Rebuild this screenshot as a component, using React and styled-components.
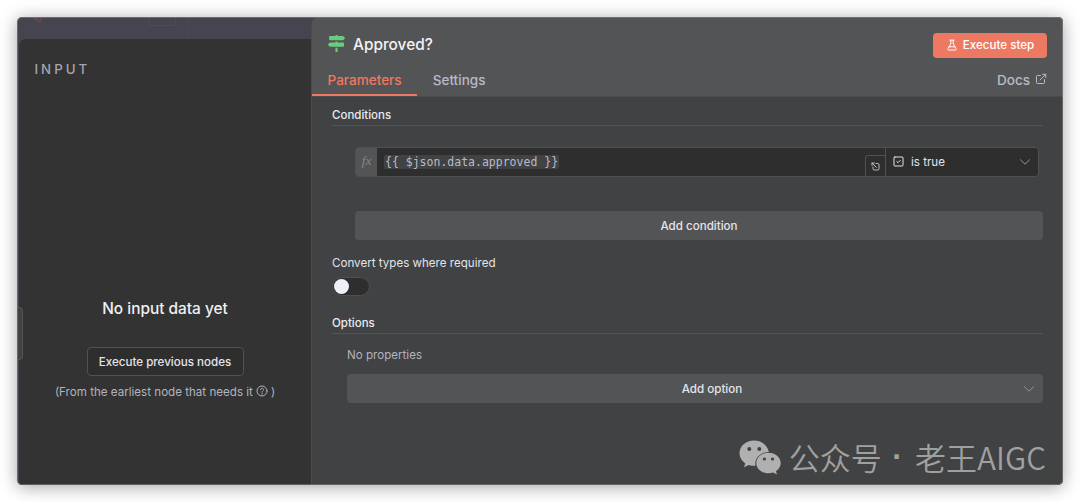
import React from "react";
import styled, { createGlobalStyle } from "styled-components";
import { FaMapSigns } from "react-icons/fa";

function App() {
  return (
    <>
      <GlobalStyle />
      <Window>
        <Canvas>
          <Webhook viewBox="0 0 12 6">
            <path d="M1 0 L4 3 M5 0 C4 5 9 6 9 1" />
          </Webhook>
          <CanvasBox />
          <CanvasDivider />
          <InputPanel>
            <PanelTitle>INPUT</PanelTitle>
            <Empty>
              <EmptyTitle>No input data yet</EmptyTitle>
              <OutlineButton>Execute previous nodes</OutlineButton>
              <Hint>
                <span>(From the earliest node that needs it</span>
                <HelpIcon />
                <span>)</span>
              </Hint>
            </Empty>
          </InputPanel>
          <DragTab />
        </Canvas>
        <NodePanel>
          <Header>
            <TitleRow>
              <NodeIcon />
              <NodeName>Approved?</NodeName>
              <ExecuteButton>
                <FlaskIcon />
                Execute step
              </ExecuteButton>
            </TitleRow>
            <Tabs>
              <Tab $active>Parameters</Tab>
              <Tab>Settings</Tab>
              <Docs>
                Docs
                <ExternalIcon />
              </Docs>
            </Tabs>
          </Header>
          <Body>
            <SectionTitle>Conditions</SectionTitle>
            <Condition>
              <Fx>fx</Fx>
              <Expression>
                <Code>{"{{ $json.data.approved }}"}</Code>
                <Expand>
                  <ExpandIcon />
                </Expand>
              </Expression>
              <Operator>
                <CheckIcon />
                <span>is true</span>
                <Chevron />
              </Operator>
            </Condition>
            <WideButton $indent={23}>Add condition</WideButton>
            <Label>Convert types where required</Label>
            <Switch>
              <Knob />
            </Switch>
            <SectionTitle $options>Options</SectionTitle>
            <Muted>No properties</Muted>
            <WideButton $indent={15} $select>
              <span>Add option</span>
              <Chevron />
            </WideButton>
          </Body>
        </NodePanel>
        <Watermark>
          <WechatIcon />
          <WatermarkText>公众号</WatermarkText>
          <Dot>·</Dot>
          <WatermarkText>老王AIGC</WatermarkText>
        </Watermark>
      </Window>
    </>
  );
}

export default App;

const HelpIcon = () => (
  <Icon $size={12} $lift={-3} viewBox="0 0 12 12">
    <circle cx="6" cy="6" r="5" />
    <path d="M4.5 4.8 C4.5 2.8 7.6 2.8 7.6 4.7 C7.6 6 6 5.9 6 7.1 M6 8.4 V9.1" />
  </Icon>
);

const FlaskIcon = () => (
  <Icon $size={12} viewBox="0 0 12 12">
    <path d="M4 1.2 H8 M4.8 1.2 V4.8 L2 9.6 C1.6 10.4 2 11 2.8 11 H9.2 C10 11 10.4 10.4 10 9.6 L7.2 4.8 V1.2 M3.2 7.8 H8.8" />
  </Icon>
);

const ExternalIcon = () => (
  <Icon $size={12} $lift={-2} viewBox="0 0 12 12">
    <path d="M5.5 2.5 H2.5 C1.8 2.5 1.5 2.8 1.5 3.5 V9.5 C1.5 10.2 1.8 10.5 2.5 10.5 H8.5 C9.2 10.5 9.5 10.2 9.5 9.5 V6.5 M7.5 1.3 H10.8 V4.6 M10.6 1.5 L5 7" />
  </Icon>
);

const ExpandIcon = () => (
  <Icon $size={9} viewBox="0 0 9 9">
    <path d="M5 1.5 H6.8 Q8 1.5 8 2.7 V6.8 Q8 8 6.8 8 H3.2 Q2 8 2 6.8 V5 M5.4 5.4 L1 1 M1 3.4 V1 H3.4" />
  </Icon>
);

const CheckIcon = () => (
  <Icon $size={11} viewBox="0 0 11 11">
    <rect x="1" y="1" width="9" height="9" rx="0.8" />
    <path d="M3.8 5.5 L5 6.7 L7.3 4.4" />
  </Icon>
);

const Chevron = () => (
  <ChevronSvg viewBox="0 0 12 8">
    <path d="M1.2 1.5 L6 6.2 L10.8 1.5" />
  </ChevronSvg>
);

const WechatIcon = () => (
  <WechatSvg viewBox="0 0 42 35">
    <path
      fillRule="evenodd"
      d="M15 0.5 C6.8 0.5 0.5 6 0.5 13.3 C0.5 17.5 2.8 21 6.2 23.4 L5 27.3 L9.8 25 C12 25.7 14 26 16.5 25.8 C15.2 18.5 21 12 29.8 12 C28.5 5 22.5 0.5 15 0.5 Z M10.3 7 A2 2 0 1 1 10.3 11 A2 2 0 1 1 10.3 7 Z M20.3 7 A2 2 0 1 1 20.3 11 A2 2 0 1 1 20.3 7 Z"
    />
    <path
      fillRule="evenodd"
      d="M29.5 12.8 C22.4 12.8 17.3 17.3 17.3 23 C17.3 28.8 22.6 33.2 29.5 33.2 C31 33.2 32.6 32.9 34 32.5 L38 34.6 L37 31.2 C40 29.2 41.7 26.4 41.7 23 C41.7 17.3 36.2 12.8 29.5 12.8 Z M25.4 17.4 A1.6 1.6 0 1 1 25.4 20.6 A1.6 1.6 0 1 1 25.4 17.4 Z M33.5 17.4 A1.6 1.6 0 1 1 33.5 20.6 A1.6 1.6 0 1 1 33.5 17.4 Z"
    />
  </WechatSvg>
);

const GlobalStyle = createGlobalStyle`
  * {
    box-sizing: border-box;
  }
  body {
    margin: 0;
    padding: 17px;
    height: 502px;
    overflow: hidden;
    background: #fff;
    font-family: Inter, sans-serif;
    font-size: 11.6px;
    color: #e8e9ee;
  }
`;

const Window = styled.div`
  position: relative;
  display: flex;
  width: 1046px;
  height: 468px;
  border-radius: 5px;
  background: #46454f;
  box-shadow: 0 2px 17px rgba(0, 0, 0, 0.36);

  &:after {
    content: "";
    position: absolute;
    inset: 0;
    border: 1px solid rgba(150, 150, 155, 0.45);
    border-radius: 5px;
  }
`;

const Canvas = styled.div`
  position: relative;
  width: 294px;
  padding: 22px 0 0 2px;
  overflow: hidden;
  border-radius: 5px 0 0 5px;
`;

const Webhook = styled.svg`
  position: absolute;
  top: 0;
  left: 15px;
  width: 12px;
  height: 6px;
  fill: none;
  stroke: #79475c;
  stroke-width: 1.2;
`;

const CanvasBox = styled.div`
  position: absolute;
  top: -3px;
  left: 131px;
  width: 28px;
  height: 12px;
  border: 1px solid #4e4c57;
  border-radius: 3px;
`;

const CanvasDivider = styled.div`
  position: absolute;
  top: 0;
  left: 171px;
  width: 1px;
  height: 22px;
  background: #4c4a55;
`;

const InputPanel = styled.div`
  display: flex;
  flex-direction: column;
  height: 446px;
  padding-top: 21px;
  background: #333;
  border-radius: 7px 0 0 0;
`;

const PanelTitle = styled.div`
  padding-left: 15.5px;
  height: 18px;
  line-height: 18px;
  font-size: 13.3px;
  font-weight: 450;
  letter-spacing: 3px;
  color: #a2a5b0;
`;

const Empty = styled.div`
  display: flex;
  flex-direction: column;
  align-items: center;
  padding-top: 221px;
`;

const EmptyTitle = styled.div`
  height: 20px;
  line-height: 20px;
  font-size: 15.4px;
  font-weight: 450;
  color: #f0f0f5;
`;

const OutlineButton = styled.button`
  width: 157px;
  height: 29px;
  margin-top: 28px;
  padding: 0;
  font: 500 11.6px Inter, sans-serif;
  color: #e3e4ea;
  background: #2e2e2e;
  border: 1px solid #505153;
  border-radius: 4px;
`;

const Hint = styled.div`
  display: flex;
  align-items: center;
  gap: 3px;
  height: 20px;
  margin-top: 6px;
  color: #b0b3bf;
`;

const DragTab = styled.div`
  position: absolute;
  left: 0;
  top: 290px;
  width: 6px;
  height: 53px;
  background: #414243;
  border: 1px solid #525355;
  border-left: 0;
  border-radius: 0 4px 4px 0;
`;

const NodePanel = styled.div`
  flex: 1;
  display: flex;
  flex-direction: column;
  overflow: hidden;
  background: #414243;
  border-left: 1px solid #4b4c4e;
  border-radius: 6px 5px 5px 0;
`;

const Header = styled.div`
  height: 80px;
  background: #535456;
  border-bottom: 1px solid #4b4c4e;
`;

const TitleRow = styled.div`
  display: flex;
  align-items: center;
  height: 48px;
  padding: 8px 16px 0 16px;
`;

const NodeIcon = styled(FaMapSigns)`
  width: 17px;
  height: 17px;
  margin-top: -4px;
  color: #6bcb80;
`;

const NodeName = styled.div`
  flex: 1;
  margin: -2px 0 0 8px;
  font-size: 15.4px;
  font-weight: 450;
  color: #f2f2f6;
`;

const ExecuteButton = styled.button`
  display: flex;
  align-items: center;
  justify-content: center;
  gap: 5px;
  width: 114px;
  height: 25px;
  padding: 0;
  font: 500 11.6px Inter, sans-serif;
  color: #fff;
  background: #ee7962;
  border: 0;
  border-radius: 4px;
`;

const Tabs = styled.div`
  display: flex;
  height: 31px;
  padding-right: 16px;
`;

const Tab = styled.div`
  height: 31px;
  padding: 0 15.5px;
  line-height: 30px;
  font-size: 13.55px;
  font-weight: 450;
  color: ${(props) => (props.$active ? "#ee7962" : "#b8bbc8")};
  border-bottom: 2px solid ${(props) => (props.$active ? "#ee7962" : "transparent")};
`;

const Docs = styled.div`
  display: flex;
  align-items: center;
  gap: 5px;
  height: 30px;
  margin-left: auto;
  font-size: 13.55px;
  font-weight: 450;
  color: #b8bbc8;
`;

const Body = styled.div`
  flex: 1;
  padding: 0 20px 0 20px;
`;

const SectionTitle = styled.div`
  height: 29px;
  margin-top: ${(props) => (props.$options ? "9px" : "0")};
  padding-top: 9px;
  line-height: 18px;
  font-weight: 500;
  font-size: 11.5px;
  color: #e9eaef;
  border-bottom: 1px solid #535456;
`;

const Condition = styled.div`
  display: flex;
  height: 30px;
  margin: 21px 4px 0 23px;
  border: 1px solid #505153;
  border-radius: 4px;
  overflow: hidden;
`;

const Fx = styled.div`
  width: 21px;
  text-align: center;
  font: italic 13.5px/26px "Liberation Serif", serif;
  color: #85868f;
  background: #535456;
`;

const Expression = styled.div`
  flex: 1;
  display: flex;
  align-items: center;
  justify-content: space-between;
  padding-left: 7px;
  background: #2e2e2e;
`;

const Code = styled.span`
  padding: 0 1px;
  font: 11.5px/14px "DejaVu Sans Mono", monospace;
  color: #b8bbc8;
  background: #414243;
  border-radius: 2px;
`;

const Expand = styled.div`
  display: flex;
  align-items: center;
  justify-content: center;
  align-self: flex-end;
  width: 20px;
  height: 21px;
  color: #b8bbc8;
  border: 1px solid #505153;
  border-width: 1px 0 0 1px;
  border-radius: 3px 0 0 0;
`;

const Operator = styled.div`
  display: flex;
  align-items: center;
  gap: 7px;
  width: 153px;
  padding: 0 7px 1px 7px;
  background: #2e2e2e;
  border-left: 1px solid #505153;
  color: #e3e4e9;

  svg:last-child {
    margin-left: auto;
  }
`;

const WideButton = styled.div`
  display: flex;
  align-items: center;
  justify-content: center;
  height: 29px;
  margin-top: ${(props) => (props.$select ? "10px" : "34px")};
  margin-left: ${(props) => props.$indent}px;
  padding-right: ${(props) => (props.$select ? "8px" : "0")};
  font-weight: 450;
  color: #e3e4e9;
  background: #535456;
  border-radius: 4px;

  span {
    flex: 1;
    padding-left: 54px;
    text-align: center;
  }
`;

const Label = styled.div`
  height: 18px;
  margin-top: 14px;
  line-height: 18px;
  color: #e3e4e9;
`;

const Switch = styled.div`
  width: 38px;
  height: 19px;
  margin-top: 5px;
  padding: 1px;
  background: #2e2e2e;
  border: 1px solid #4e4f51;
  border-radius: 10px;
`;

const Knob = styled.div`
  width: 15px;
  height: 15px;
  border-radius: 50%;
  background: #f0f0f8;
`;

const Muted = styled.div`
  height: 18px;
  margin: 12px 0 0 15px;
  line-height: 18px;
  color: #b0b3bf;
`;

const Icon = styled.svg`
  flex: none;
  width: ${(props) => props.$size}px;
  height: ${(props) => props.$size}px;
  margin-top: ${(props) => props.$lift || 0}px;
  fill: none;
  stroke: currentColor;
  stroke-width: 1;
  stroke-linecap: round;
  stroke-linejoin: round;
`;

const ChevronSvg = styled.svg`
  flex: none;
  width: 12px;
  height: 8px;
  fill: none;
  stroke: #9295a0;
  stroke-width: 1;
`;

const Watermark = styled.div`
  position: absolute;
  right: 17px;
  bottom: 7px;
  display: flex;
  align-items: center;
  height: 42px;
  color: #a0a0a0;
`;

const WechatSvg = styled.svg`
  width: 42px;
  height: 35px;
  margin-right: 8px;
  fill: #b0b0b0;
`;

const WatermarkText = styled.span`
  font: 350 31px/42px "Noto Sans CJK SC", sans-serif;
  letter-spacing: 0.1px;
  white-space: nowrap;
`;

const Dot = styled.span`
  width: 33px;
  padding-right: 2px;
  text-align: center;
  font: bold 31px/42px "Liberation Sans", sans-serif;
`;
